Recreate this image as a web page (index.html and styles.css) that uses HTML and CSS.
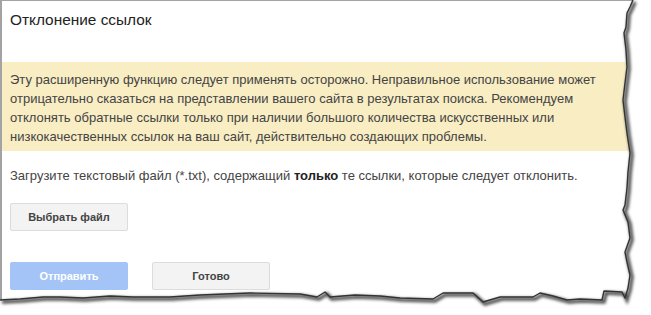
FILE: index.html
```html
<!DOCTYPE html>
<html lang="ru">
<head>
<meta charset="utf-8">
<title>Отклонение ссылок</title>
<link rel="stylesheet" href="styles.css">
</head>
<body>
<div class="page">
  <div class="dialog">
    <h1 class="title">Отклонение ссылок</h1>
    <div class="notice">Эту расширенную функцию следует применять осторожно. Неправильное использование может<br>отрицательно сказаться на представлении вашего сайта в результатах поиска. Рекомендуем<br>отклонять обратные ссылки только при наличии большого количества искусственных или<br>низкокачественных ссылок на ваш сайт, действительно создающих проблемы.</div>
    <p class="upload">Загрузите текстовый файл (*.txt), содержащий <b>только</b> те ссылки, которые следует отклонить.</p>
    <div class="file-row"><button class="btn">Выбрать файл</button></div>
    <div class="actions">
      <button class="btn btn-primary" disabled>Отправить</button>
      <button class="btn">Готово</button>
    </div>
  </div>
  <svg class="torn" width="651" height="315" viewBox="0 0 651 315" aria-hidden="true">
    <defs>
      <filter id="blur" x="-10%" y="-10%" width="120%" height="120%">
        <feGaussianBlur stdDeviation="1.8"/>
      </filter>
    </defs>
    <path class="outside" d="M633,0 L630,7 L627,13 L626,27 L624,33 L626,50 L627,67 L625,83 L623,100 L625,117 L627,133 L630,153 L628,172 L627,188 L625,205 L623,210 L628,222 L630,238 L625,252 L627,262 L630,275 L628,288 L625,298 L622,292 L604,291 L602,300 L580,299 L567,300 L553,296 L540,293 L533,297 L500,297 L483,302 L473,293 L443,293 L433,299 L400,298 L380,296 L355,295 L330,297 L325,292 L317,297 L300,294 L250,293 L200,295 L170,297 L133,297 L110,296 L83,298 L60,297 L43,297 L20,299 L0,300 L0,315 L651,315 L651,0 Z"/>
    <path class="shadow" filter="url(#blur)" d="M633,0 L630,7 L627,13 L626,27 L624,33 L626,50 L627,67 L625,83 L623,100 L625,117 L627,133 L630,153 L628,172 L627,188 L625,205 L623,210 L628,222 L630,238 L625,252 L627,262 L630,275 L628,288 L625,298 L622,292 L604,291 L602,300 L580,299 L567,300 L553,296 L540,293 L533,297 L500,297 L483,302 L473,293 L443,293 L433,299 L400,298 L380,296 L355,295 L330,297 L325,292 L317,297 L300,294 L250,293 L200,295 L170,297 L133,297 L110,296 L83,298 L60,297 L43,297 L20,299 L0,300"/>
    <path class="edge" d="M633,0 L630,7 L627,13 L626,27 L624,33 L626,50 L627,67 L625,83 L623,100 L625,117 L627,133 L630,153 L628,172 L627,188 L625,205 L623,210 L628,222 L630,238 L625,252 L627,262 L630,275 L628,288 L625,298 L622,292 L604,291 L602,300 L580,299 L567,300 L553,296 L540,293 L533,297 L500,297 L483,302 L473,293 L443,293 L433,299 L400,298 L380,296 L355,295 L330,297 L325,292 L317,297 L300,294 L250,293 L200,295 L170,297 L133,297 L110,296 L83,298 L60,297 L43,297 L20,299 L0,300"/>
  </svg>
</div>
</body>
</html>
```

FILE: styles.css
```css
html, body {
  margin: 0;
  padding: 0;
  background: #fff;
}

.page {
  position: relative;
  width: 651px;
  height: 315px;
  overflow: hidden;
}

.dialog {
  box-sizing: border-box;
  width: 651px;
  height: 315px;
  border-top: 1px solid #a3a3a3;
  border-left: 2px solid #a3a3a3;
  font-family: Arial, "Liberation Sans", sans-serif;
  color: #444;
  display: flex;
  flex-direction: column;
}

.title {
  margin: 0;
  padding: 9px 0 0 8px;
  font-size: 15.4px;
  font-weight: normal;
  line-height: 20px;
  color: #222;
}

.notice {
  margin-top: 32px;
  background: #f8edc3;
  padding: 8px 8px 5px 8px;
  font-size: 13px;
  line-height: 19px;
  color: #444;
  white-space: nowrap;
}

.upload {
  margin: 16px 0 0 0;
  padding-left: 8px;
  font-size: 13px;
  line-height: 18px;
  color: #444;
  white-space: nowrap;
}

.upload b {
  color: #222;
}

.file-row {
  margin-top: 18px;
  padding-left: 8px;
}

.actions {
  margin-top: 31px;
  padding-left: 8px;
  display: flex;
  gap: 24px;
}

.btn {
  box-sizing: border-box;
  width: 118px;
  height: 28px;
  padding: 0;
  border: 1px solid #dcdcdc;
  border-radius: 2px;
  background: #f3f3f3;
  font-family: Arial, "Liberation Sans", sans-serif;
  font-size: 11px;
  font-weight: bold;
  color: #444;
}

.btn-primary {
  background: #a4c4f7;
  border-color: #a4c4f7;
  color: #fff;
}

.torn {
  position: absolute;
  left: 0;
  top: 0;
}

.outside {
  fill: #fff;
}

.shadow {
  fill: none;
  stroke: #000;
  stroke-opacity: 0.7;
  stroke-width: 3.5;
  transform: translate(2px, 2px);
}

.edge {
  fill: none;
  stroke: #333;
  stroke-width: 1.4;
  stroke-linejoin: round;
}
```
